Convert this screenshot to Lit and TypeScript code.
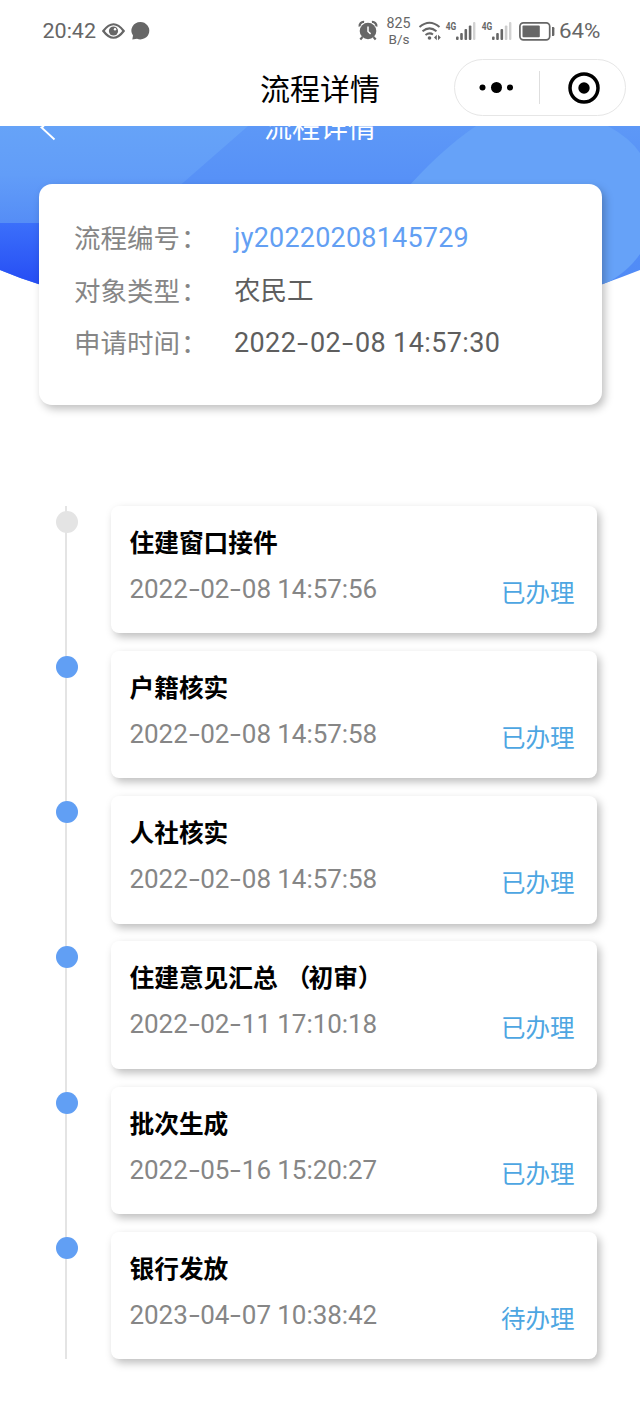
import { LitElement, html, css, svg } from "lit";
import { customElement, property } from "lit/decorators.js";

const CJK = css`"Noto Sans CJK SC", sans-serif`;

/* Date text with widened hyphens, as in a DIN-style face */
const stamp = (s: string) =>
  s.split(/(-)/).map((p) => (p === "-" ? html`<span class="hy">-</span>` : p));

/* Full-width opening parenthesis set closer to the word it encloses */
const tight = (s: string) =>
  s.split(/(（)/).map((p) => (p === "（" ? html`<span class="po">（</span>` : p));

@customElement("status-bar")
class StatusBar extends LitElement {
  static styles = css`
    :host { display: block; height: 60px; color: #666; font-family: Roboto, sans-serif; }
    svg { display: block; }
    text { fill: #666; }
  `;
  render() {
    return html`<svg width="640" height="60" viewBox="0 0 640 60" fill="#666">
      <text x="42.500" y="38.300" font-size="21" textLength="53.500" lengthAdjust="spacingAndGlyphs">20:42</text>
      <path d="M103.300 31Q113.500 17.500 123.700 31Q113.500 44.500 103.300 31Z" fill="none" stroke="#666" stroke-width="2.200"/>
      <circle cx="113.500" cy="31" r="4.600"/><circle cx="115" cy="29.300" r="1.200" fill="#fff"/>
      <path d="M140.500 22A9 8.700 0 1 1 137 38.800L132.300 39.500L133 35.600A9 8.700 0 0 1 140.500 22Z"/>
      <circle cx="368" cy="31" r="8.300"/>
      <path d="M359.600 26.500a4 4 0 0 1 4.500-4.500M376.400 26.500a4 4 0 0 0-4.500-4.500M362.500 37l-2.200 2.400M373.500 37l2.200 2.400" fill="none" stroke="#666" stroke-width="2.200"/>
      <path d="M368 26.500v5l2.600 2.400" fill="none" stroke="#fff" stroke-width="1.500"/>
      <text x="386.500" y="28" font-size="14" textLength="24" lengthAdjust="spacingAndGlyphs">825</text>
      <text x="388.500" y="43.600" font-size="13.500" textLength="21" lengthAdjust="spacingAndGlyphs">B/s</text>
      <g fill="none" stroke="#666" stroke-width="2">
        <path d="M419.500 27Q429.500 18.500 439.500 27M422.500 31.300Q429.500 25.500 436.500 31.300M425.500 35Q429.500 32 433 34.500"/>
      </g>
      <circle cx="429.500" cy="38" r="1.800"/>
      <path d="M434 37.500l2.800-2.800v5.600zM440.800 37.500l-2.800-2.800v5.600z"/>
      ${[0, 36].map((dx, n) => svg`<g transform="translate(${dx} 0)">
        <text x="445.800" y="29.800" font-size="11.500" font-weight="700" textLength="10.500" lengthAdjust="spacingAndGlyphs">4G</text>
        <rect x="456" y="36.500" width="2.600" height="3.500" rx="1"/>
        <rect x="460.200" y="33" width="2.600" height="7" rx="1"/>
        <rect x="464.500" y="29" width="2.600" height="11" rx="1"/>
        <rect x="468.800" y="25.500" width="2.600" height="14.500" rx="1" fill=${n ? "#ccc" : "#666"}/>
        <rect x="473" y="22" width="2.400" height="18" rx="1" fill="#d2d2d2"/></g>`)}
      <rect x="519.900" y="22.800" width="29.800" height="17" rx="3.500" fill="none" stroke="#666" stroke-width="1.700"/>
      <rect x="522.500" y="25.400" width="17.300" height="11.800" rx="1"/>
      <path d="M552 27h1.200q1.200 0 1.200 1.200v6.600q0 1.200-1.200 1.200h-1.200z"/>
      <text x="559" y="38.300" font-size="21" textLength="41.500" lengthAdjust="spacingAndGlyphs">64%</text>
    </svg>`;
  }
}

@customElement("nav-bar")
class NavBar extends LitElement {
  static styles = css`
    :host { display: grid; grid-template-columns: 1fr auto 1fr; align-items: start; height: 66px; padding: 0 14px;
      box-sizing: border-box; background: #fff; font-family: ${CJK}; color: #000; }
    .title { font-size: 30px; line-height: 40px; margin-top: 7px; }
    .capsule { justify-self: end; box-sizing: border-box; width: 172px; height: 57px; border: 1px solid #e6e6e6;
      border-radius: 29px; display: block; margin-top: -1px; }
  `;
  render() {
    return html`<span></span><span class="title">流程详情</span>
      <svg class="capsule" viewBox="0 0 170 55">
        <circle cx="27.500" cy="27.500" r="3"/><circle cx="41.500" cy="27.500" r="5.500"/><circle cx="55" cy="27.500" r="3"/>
        <path d="M84.500 11v33" stroke="#dedede"/>
        <circle cx="129" cy="28" r="14" fill="none" stroke="#000" stroke-width="3.500"/><circle cx="129" cy="28" r="5.700"/>
      </svg>`;
  }
}

@customElement("hero-banner")
class HeroBanner extends LitElement {
  static styles = css`
    :host { display: grid; height: 174px; overflow: hidden; font-family: ${CJK}; }
    svg, .cap { grid-area: 1 / 1; }
    svg { display: block; }
    .cap { justify-self: center; color: #fff; font-size: 28px; line-height: 40px; margin-top: -20px; height: 40px; }
  `;
  render() {
    return html`<svg width="640" height="174" viewBox="0 126 640 174">
        <defs>
          <linearGradient id="base" x1="0" y1="0" x2="0" y2="1"><stop offset="0" stop-color="#5d98f7"/><stop offset=".35" stop-color="#5690f7"/><stop offset="1" stop-color="#4f8af6"/></linearGradient>
          <linearGradient id="left" x1="0" y1="0" x2="0" y2="1"><stop offset="0" stop-color="#66a3f8"/><stop offset=".5" stop-color="#629df8"/><stop offset="1" stop-color="#558df6"/></linearGradient>
          <linearGradient id="deep" x1="0" y1="0" x2="0" y2="1"><stop offset="0" stop-color="#3b6ffa"/><stop offset=".8" stop-color="#264df4"/></linearGradient>
          <clipPath id="arc"><path d="M0 126H640V270Q602 285 570 295H80Q38 286 0 270Z"/></clipPath>
        </defs>
        <g clip-path="url(#arc)">
          <path d="M0 126H640V300H0Z" fill="url(#base)"/>
          <path d="M0 126H248L137 223H0Z" fill="url(#left)"/>
          <path d="M0 223H137V300H0Z" fill="url(#deep)"/>
          <path d="M400 196Q440 150 476 126H608Q630 138 640 153V254Q628 272 602 286H400Z" fill="#66a2f8"/>
        </g>
        <path d="M44 126L41.500 127.500L54.500 139.500" fill="none" stroke="#fff" stroke-width="1.900"/>
      </svg><span class="cap">流程详情</span>`;
  }
}

@customElement("info-card")
class InfoCard extends LitElement {
  static styles = css`
    :host { display: block; box-sizing: border-box; margin: -116px 38.500px 0; height: 220.500px; padding: 27px 36px; background: #fff;
      border-radius: 13px; box-shadow: 3px 4px 9px rgba(0,0,0,.25); position: relative; font-family: Roboto, ${CJK}; }
    .row { display: grid; grid-template-columns: 159.500px auto; height: 52.700px; line-height: 52.700px; font-size: 26.500px; color: #868686; }
    .k { font-family: ${CJK}; margin-left: -.5px; }
    .colon { margin-left: 1px; }
    .val { color: #5e5e5e; white-space: nowrap; font-size: 27px; letter-spacing: .2px; padding-top: 1px; }
    .date { letter-spacing: .38px; }
    .cn { font-size: 26.500px; letter-spacing: 0; }
    .id { color: #639ff3; }
    .hy { display: inline-block; width: 13.800px; transform: scaleX(1.500); text-align: center; }
  `;
  render() {
    const k = (s: string) => html`<span class="k">${s}<span class="colon">：</span></span>`;
    return html`<div class="row">${k("流程编号")}<span class="val id">jy20220208145729</span></div>
      <div class="row">${k("对象类型")}<span class="val cn">农民工</span></div>
      <div class="row">${k("申请时间")}<span class="val date">${stamp("2022-02-08 14:57:30")}</span></div>`;
  }
}

@customElement("step-item")
class StepItem extends LitElement {
  @property() name = "";
  @property() time = "";
  @property() state = "";
  @property({ type: Boolean }) muted = false;
  static styles = css`
    :host { display: grid; grid-template-columns: 22px 1fr; column-gap: 33px; height: 145.200px; font-family: Roboto, ${CJK}; }
    .rail { background: linear-gradient(#e4e4e4, #e4e4e4) 9px 0 / 2px 100% no-repeat; padding-top: 5px; }
    .dot { width: 22px; height: 22px; border-radius: 50%; background: #619ff4; }
    .dot.muted { background: #e4e4e4; }
    .card { height: 127.500px; box-sizing: border-box; background: #fff; border-radius: 8px; padding: 14px 22px 0 18.500px;
      box-shadow: 3px 4px 8px rgba(0,0,0,.26); }
    .name { font: 700 24.700px/42px ${CJK}; height: 44px; color: #000; }
    .po { margin: 0 -2px 0 2.500px; }
    .line { display: flex; justify-content: space-between; line-height: 50px; height: 50px; }
    .time { font-size: 26px; color: #868686; white-space: nowrap; letter-spacing: -.06px; }
    .hy { display: inline-block; width: 12.500px; transform: scaleX(1.500); text-align: center; }
    .state { font: 24.500px/55px ${CJK}; color: #4da6e2; }
  `;
  render() {
    return html`<div class="rail"><div class="dot ${this.muted ? "muted" : ""}"></div></div>
      <div class="card"><div class="name">${tight(this.name)}</div>
        <div class="line"><span class="time">${stamp(this.time)}</span><span class="state">${this.state}</span></div></div>`;
  }
}

@customElement("app-root")
class AppRoot extends LitElement {
  static styles = css`
    :host { display: block; width: 640px; height: 1422px; overflow: hidden; background: #fff; }
    .steps { display: flex; flex-direction: column; padding: 101.300px 43.500px 0 56px; }
    step-item:last-child { height: 127.500px; }
  `;
  private steps = [
    ["住建窗口接件", "2022-02-08 14:57:56", "已办理"],
    ["户籍核实", "2022-02-08 14:57:58", "已办理"],
    ["人社核实", "2022-02-08 14:57:58", "已办理"],
    ["住建意见汇总 （初审）", "2022-02-11 17:10:18", "已办理"],
    ["批次生成", "2022-05-16 15:20:27", "已办理"],
    ["银行发放", "2023-04-07 10:38:42", "待办理"],
  ];
  render() {
    return html`<status-bar></status-bar><nav-bar></nav-bar><hero-banner></hero-banner><info-card></info-card>
      <div class="steps">${this.steps.map(
        ([n, t, s], i) => html`<step-item .name=${n} .time=${t} .state=${s} .muted=${i === 0}></step-item>`
      )}</div>`;
  }
}
